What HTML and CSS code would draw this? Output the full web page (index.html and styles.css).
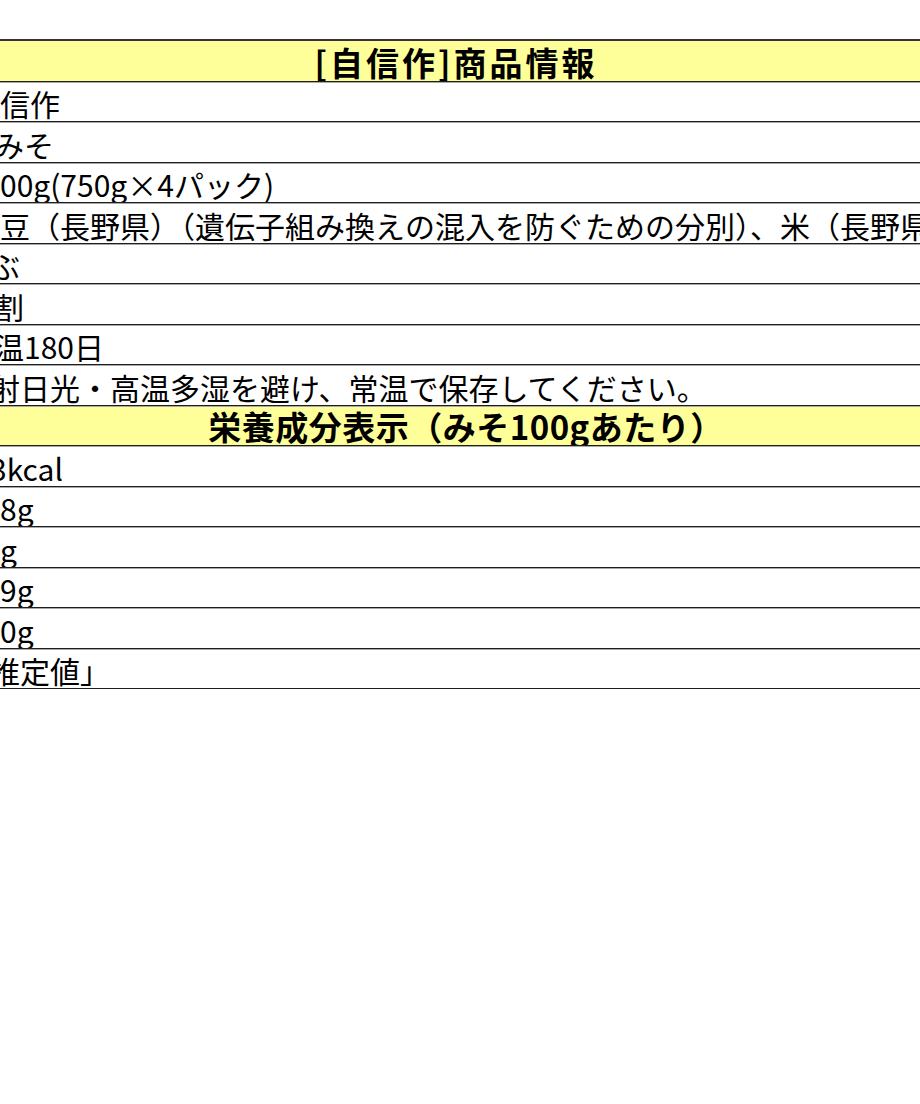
FILE: index.html
```html
<!DOCTYPE html>
<html lang="ja">
<head>
<meta charset="utf-8">
<title>商品情報</title>
<link rel="stylesheet" href="styles.css">
</head>
<body>
<div class="sheet">
  <div class="row head"><span class="htext h1">[自信作]商品情報</span></div>
  <div class="row"><span class="val">信作</span></div>
  <div class="row"><span class="val cut-s">みそ</span></div>
  <div class="row"><span class="val">00g(750g×4パック)</span></div>
  <div class="row"><span class="val">豆（長野県）（遺伝子組み換えの混入を防ぐための分別）、米（長野県）、食塩</span></div>
  <div class="row"><span class="val cut-m">ぶ</span></div>
  <div class="row"><span class="val cut-s">割</span></div>
  <div class="row"><span class="val cut-s">温180日</span></div>
  <div class="row"><span class="val cut-m">射日光・高温多湿を避け、常温で保存してください。</span></div>
  <div class="row head"><span class="htext h2">栄養成分表示（みそ100gあたり）</span></div>
  <div class="row"><span class="val cut-m">3kcal</span></div>
  <div class="row"><span class="val">8g</span></div>
  <div class="row"><span class="val">g</span></div>
  <div class="row"><span class="val">9g</span></div>
  <div class="row"><span class="val">0g</span></div>
  <div class="row"><span class="val cut-m">推定値」</span></div>
</div>
</body>
</html>
```
FILE: styles.css
```css
html, body {
  margin: 0;
  padding: 0;
  background: #ffffff;
  overflow: hidden;
}
body {
  width: 920px;
  height: 1104px;
  font-family: "Noto Sans CJK JP", "Noto Sans", sans-serif;
  color: #000000;
}
.sheet {
  margin-top: 39px;
  width: 920px;
  border-top: 2px solid #333333;
  overflow: hidden;
}
.row {
  box-sizing: border-box;
  height: 40.5px;
  display: flex;
  align-items: flex-end;
  white-space: nowrap;
  overflow: hidden;
  border-bottom: 1px solid #1e1e1e;
  background: #ffffff;
}
.row + .row {
  border-top: 1px solid #a8a8a8;
}
.row.head {
  background: #ffff99;
  justify-content: center;
}
.htext {
  font-size: 33px;
  font-weight: 700;
  line-height: 37px;
}
.htext.h1 {
  letter-spacing: 3px;
  margin-left: -8px;
}
.htext.h2 {
  letter-spacing: 0.5px;
  margin-left: 12px;
}
.val {
  font-size: 30px;
  line-height: 36px;
}
.val.cut-s {
  margin-left: -6px;
}
.val.cut-m {
  margin-left: -10px;
}
```
